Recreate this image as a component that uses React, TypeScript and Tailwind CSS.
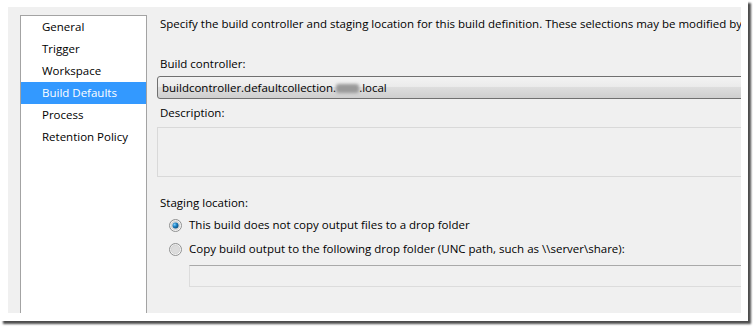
import React from "react";

const font = { fontFamily: '"Open Sans", "Noto Sans", sans-serif' };

function Radio({ checked }: { checked?: boolean }) {
  return (
    <svg width="13" height="13" viewBox="0 0 13 13" className="shrink-0">
      <defs>
        <linearGradient id={checked ? "rg1" : "rg0"} x1="0" y1="0" x2="1" y2="1">
          <stop offset="0" stopColor="#e9e9e9" />
          <stop offset="1" stopColor="#ffffff" />
        </linearGradient>
        <radialGradient id="dot" cx="0.35" cy="0.35" r="0.7">
          <stop offset="0" stopColor="#7fd0ff" />
          <stop offset="0.5" stopColor="#1d7fbf" />
          <stop offset="1" stopColor="#0d4f80" />
        </radialGradient>
      </defs>
      <circle cx="6.5" cy="6.5" r="6" fill={`url(#${checked ? "rg1" : "rg0"})`} stroke="#8e8f8f" strokeWidth="1" />
      <circle cx="6.5" cy="6.5" r="4.3" fill="#dcdcdc" stroke="#c8c8c8" strokeWidth="0.6" />
      {checked && <circle cx="6.5" cy="6.5" r="3" fill="url(#dot)" />}
    </svg>
  );
}

export default function App() {
  const items = ["General", "Trigger", "Workspace", "Build Defaults", "Process", "Retention Policy"];
  return (
    <div className="w-[753px] h-[328px] bg-white text-[11.5px] text-black leading-[16px]" style={font}>
      <div className="w-[748px] h-[321px] bg-white pl-[8px] pt-[7px] shadow-[3px_3px_2px_rgba(0,0,0,0.7)]">
        <div className="w-[733px] h-[306px] bg-[#f0f0f0] overflow-hidden flex pl-[12px] pt-[8px]">
          <div className="w-[127px] h-[320px] shrink-0 bg-white border border-[#a3a3a3]">
            {items.map((it) => (
              <div
                key={it}
                className={`h-[22px] flex items-center pl-[21px] whitespace-nowrap ${
                  it === "Build Defaults" ? "bg-[#3399ff] text-white" : ""
                }`}
              >
                {it}
              </div>
            ))}
          </div>
          <div className="ml-[10px] flex-1 min-w-0 flex flex-col pt-[1px]">
            <div className="pl-[3px] whitespace-nowrap h-[16px]">
              Specify the build controller and staging location for this build definition. These selections may be modified by users
            </div>
            <div className="pl-[3px] mt-[24px] h-[16px] whitespace-nowrap">Build controller:</div>
            <div className="mt-[4px] h-[23px] w-[600px] rounded-[3px] border border-[#707070] bg-[linear-gradient(to_bottom,#f3f3f3_0%,#ebebeb_45%,#dddddd_50%,#cfcfcf_100%)] flex items-center pl-[4px] whitespace-nowrap">
              buildcontroller.defaultcollection.
              <span className="inline-block w-[23px] h-[9px] bg-[#9a9a9a] blur-[1.5px] rounded-[3px] mt-[2px]" />
              .local
            </div>
            <div className="pl-[3px] mt-[6px] h-[16px] whitespace-nowrap">Description:</div>
            <div className="mt-[6px] h-[50px] w-[600px] border border-[#d9d9d9] bg-[#f0f0f0]" />
            <div className="pl-[3px] mt-[18px] h-[16px] whitespace-nowrap">Staging location:</div>
            <div className="pl-[12px] mt-[6px] h-[16px] flex items-center gap-[7px] whitespace-nowrap">
              <Radio checked />
              <span>This build does not copy output files to a drop folder</span>
            </div>
            <div className="pl-[12px] mt-[8px] h-[16px] flex items-center gap-[7px] whitespace-nowrap">
              <Radio />
              <span>Copy build output to the following drop folder (UNC path, such as \\server\share):</span>
            </div>
            <div className="ml-[32px] mt-[8px] h-[22px] w-[600px] border border-[#dcdcdc] border-t-[#a9a9a9] bg-[#f0f0f0]" />
          </div>
        </div>
      </div>
    </div>
  );
}
